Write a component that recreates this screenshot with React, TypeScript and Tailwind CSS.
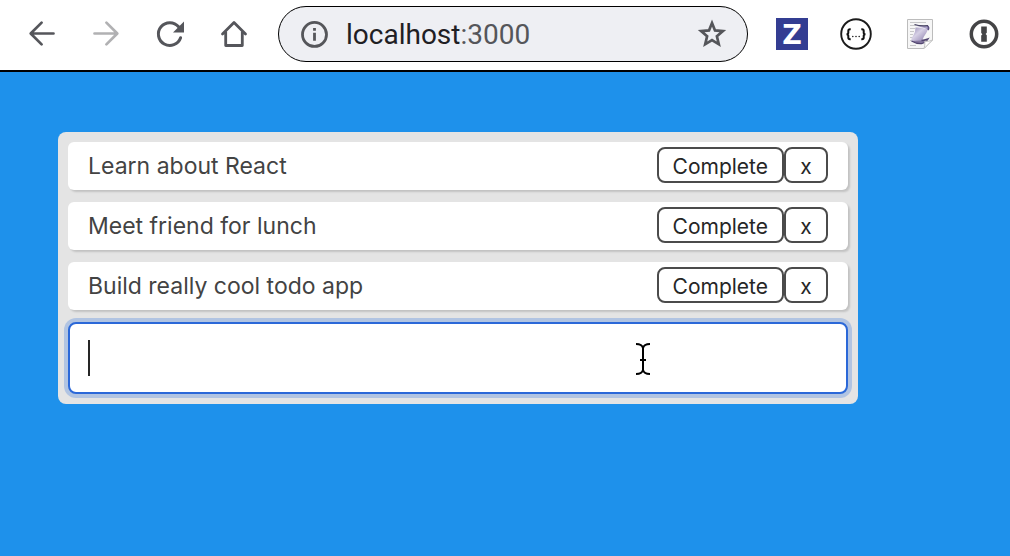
import React, { useState } from "react";

const navButton = "flex size-8 shrink-0 items-center justify-center text-[#55565b]";

function BackIcon() {
  return (
    <svg viewBox="0 0 32 32" className="size-8" fill="none" stroke="currentColor" strokeWidth="2.7" strokeLinecap="round" strokeLinejoin="round" aria-hidden="true">
      <path d="M27.5 15.5H5M15.6 4.6 4.7 15.5 15.6 26.4" />
    </svg>
  );
}

function ForwardIcon() {
  return (
    <svg viewBox="0 0 32 32" className="size-8" fill="none" stroke="#b1b1b3" strokeWidth="2.7" strokeLinecap="round" strokeLinejoin="round" aria-hidden="true">
      <path d="M4.5 15.5H27M16.4 4.6 27.3 15.5 16.4 26.4" />
    </svg>
  );
}

function ReloadIcon() {
  return (
    <svg viewBox="0 0 32 32" className="size-8" fill="none" aria-hidden="true">
      <path d="M26.6 19.7A11.4 11.4 0 1 1 24.6 8.8" stroke="currentColor" strokeWidth="3" strokeLinecap="round" />
      <path d="M30 3.5v11H19z" fill="currentColor" />
    </svg>
  );
}

function HomeIcon() {
  return (
    <svg viewBox="0 0 32 32" className="size-8" fill="none" stroke="currentColor" strokeWidth="2.8" strokeLinecap="round" strokeLinejoin="round" aria-hidden="true">
      <path d="M4.5 16 16 4.5 27.500 16M7.700 14v13.500h16.600V14" />
    </svg>
  );
}

function InfoIcon() {
  return (
    <svg viewBox="0 0 28 28" className="size-7" fill="none" aria-hidden="true">
      <circle cx="13.5" cy="14.4" r="12" stroke="currentColor" strokeWidth="2.8" />
      <path d="M12.1 8h2.800v2.800h-2.800zM12.100 12.800h2.800v8h-2.800z" fill="currentColor" />
    </svg>
  );
}

function StarIcon() {
  return (
    <svg viewBox="0 0 32 32" className="size-8" fill="none" stroke="currentColor" strokeWidth="2.7" aria-hidden="true">
      <path d="m16 5 3 7.400 7.900.7-6 5.200 1.900 8L16 22.200l-6.800 4.100 1.900-8-6-5.200 7.900-.7z" />
    </svg>
  );
}

function BracesIcon() {
  return (
    <svg viewBox="0 0 32 32" className="size-8" fill="none" aria-hidden="true">
      <circle cx="16" cy="16" r="14.8" fill="#fff" stroke="#1b1b1b" strokeWidth="1.9" />
      <path d="M10.700 11.200H10q-1.700 0-1.700 1.600v1.900q0 1.500-1.800 1.500 1.800 0 1.800 1.500v1.900q0 1.600 1.700 1.600h.7M21.300 11.200h.7q1.700 0 1.700 1.600v1.900q0 1.500 1.800 1.500-1.800 0-1.800 1.500v1.900q0 1.600-1.700 1.600h-.7" stroke="#111" strokeWidth="2" />
      <g fill="#222">
        <circle cx="12.800" cy="18.500" r=".8" />
        <circle cx="16" cy="18.500" r=".8" />
        <circle cx="19.200" cy="18.500" r=".8" />
      </g>
    </svg>
  );
}

function ScriptIcon() {
  return (
    <svg viewBox="0 0 32 32" className="size-8" fill="none" aria-hidden="true">
      <defs>
        <linearGradient id="scroll" x1="0" y1="0" x2="1" y2="1">
          <stop offset="0" stopColor="#8f83b0" />
          <stop offset=".4" stopColor="#d6d0e5" />
          <stop offset="1" stopColor="#8072a3" />
        </linearGradient>
      </defs>
      <path d="M3.500 1.500h25V22L20 30.500H3.500z" fill="#f6f6f6" stroke="#bcbcbc" />
      <path d="M6 4.500h16M6 7.500h6M6 10.500h5M6 13.500h4M6 16.500h3M6 19.500h3M6 22.500h2M6 27.500h6" stroke="#c7c7c9" />
      <path d="M11.500 9.500Q17 9 24 11.500q-1.500 3.500-4 7-1.500 2.500-2.500 6Q11 25 7 22.500q.5-2.500 2.500-5.500t2-7.500z" fill="url(#scroll)" />
      <path d="M10.500 6.500q3.500 1 7 1.200 3 0 6.500-.2 2 1.500.5 4.500-4-2.500-8-3-3.500-.7-6-2.500z" fill="#aaa0c8" />
      <path d="M10.500 6.500q5 1.800 13.500 1.200" stroke="#45415f" strokeWidth="1.3" />
      <path d="M23.500 8q2 1.500.5 4" stroke="#5b5080" strokeWidth="1.500" />
      <path d="M7.500 23q4.500 2.800 10 2.600 4-.6 6.500-4.600-4 1.500-6.500 1.500" stroke="#51456f" strokeWidth="1.400" fill="#84769f" />
      <path d="M28.500 22 20 30.500q1.200-3 .8-7.300 4 .8 7.700-1.200z" fill="#fff" stroke="#c4c4c4" />
    </svg>
  );
}

function KeyholeIcon() {
  return (
    <svg viewBox="0 0 32 32" className="size-8" fill="none" aria-hidden="true">
      <circle cx="16" cy="16" r="12.700" fill="#fff" stroke="#444446" strokeWidth="3.5" />
      <path d="M13.200 8.500h5.600v6.300l-1.200 1.300 1.200 1.200v6.500h-5.600v-6.300l1.200-1.300-1.200-1.200z" fill="#444446" />
    </svg>
  );
}

function TextCursor() {
  return (
    <svg viewBox="0 0 16 34" className="h-[34px] w-4" fill="none" stroke="#000" strokeWidth="2" aria-hidden="true">
      <path d="M1 2q6 0 7 4 1-4 7-4M8 6v22M1 32q6 0 7-4 1 4 7 4M5 18h6" />
    </svg>
  );
}

function Toolbar() {
  return (
    <header className="flex h-[72px] items-center border-b-2 border-black bg-white pr-[10px] pb-0.5 pl-[26px]">
      <nav className="flex gap-8" aria-label="Browser">
        <button type="button" aria-label="Back" className={navButton}><BackIcon /></button>
        <button type="button" aria-label="Forward" className={navButton}><ForwardIcon /></button>
        <button type="button" aria-label="Reload" className={navButton}><ReloadIcon /></button>
        <button type="button" aria-label="Home" className={navButton}><HomeIcon /></button>
      </nav>
      <div className="mx-7 flex h-14 min-w-0 flex-1 items-center rounded-full border border-black bg-[#eeeff3] pr-[19px] pl-[22px] text-[#55565a]">
        <button type="button" aria-label="Site information"><InfoIcon /></button>
        <div className="ml-[17px] flex-1 pt-0.5 font-[Roboto,sans-serif] text-[28px] leading-8 text-[#55565a]">
          <span className="text-[#1f2023]">localhost</span>:3000
        </div>
        <button type="button" aria-label="Bookmark"><StarIcon /></button>
      </div>
      <div className="flex gap-8">
        <button type="button" className="flex size-8 items-center justify-center bg-[#333d92] pt-0.5 font-['DejaVu_Sans',sans-serif] text-[27px] leading-8 font-bold text-white">Z</button>
        <button type="button" aria-label="JSON"><BracesIcon /></button>
        <button type="button" aria-label="Scripts"><ScriptIcon /></button>
        <button type="button" aria-label="Passwords"><KeyholeIcon /></button>
      </div>
    </header>
  );
}

type Todo = { text: string; isCompleted: boolean };

const actionButton =
  "flex h-9 min-w-11 items-center justify-center rounded-lg border-2 border-[#4b4b4b] bg-white px-[14px] pt-1 text-[21px] leading-7 text-[#262626]";

export default function App() {
  const [todos, setTodos] = useState<Todo[]>([
    { text: "Learn about React", isCompleted: false },
    { text: "Meet friend for lunch", isCompleted: false },
    { text: "Build really cool todo app", isCompleted: false },
  ]);
  const [value, setValue] = useState("");

  const submit = (e: React.FormEvent) => {
    e.preventDefault();
    if (!value) return;
    setTodos([...todos, { text: value, isCompleted: false }]);
    setValue("");
  };

  return (
    <div className="flex min-h-screen flex-col bg-[#1e91eb] font-[Inter,sans-serif]">
      <Toolbar />
      <main className="px-[58px] py-[60px]">
        <div className="max-w-[800px] rounded-lg bg-[#e4e4e4] p-[10px]">
          <ul>
            {todos.map((todo, index) => (
              <li key={index} className="mb-3 flex items-start justify-between rounded-md bg-white px-5 py-[5px] text-[#434343] shadow-[2px_2px_2px_rgba(0,0,0,0.15)]">
                <span className={todo.isCompleted ? "text-[23px] leading-[38px] line-through" : "text-[23px] leading-[38px]"}>{todo.text}</span>
                <div className="flex">
                  <button type="button" className={actionButton} onClick={() => setTodos(todos.map((t, i) => (i === index ? { ...t, isCompleted: true } : t)))}>Complete</button>
                  <button type="button" className={actionButton} onClick={() => setTodos(todos.filter((_, i) => i !== index))}>x</button>
                </div>
              </li>
            ))}
          </ul>
          <form onSubmit={submit} className="relative">
            <input
              type="text"
              aria-label="New todo"
              value={value}
              onChange={(e) => setValue(e.target.value)}
              className="block h-[72px] w-full rounded-lg border-2 border-[#2b68d8] bg-white px-[18px] text-[23px] text-[#434343] ring-4 ring-[#b1c4e2] outline-none"
            />
            {value === "" && <span className="pointer-events-none absolute top-[18px] left-5 h-9 w-0.5 bg-[#262626]" />}
            <span className="pointer-events-none absolute top-5 right-[197px]"><TextCursor /></span>
          </form>
        </div>
      </main>
    </div>
  );
}
